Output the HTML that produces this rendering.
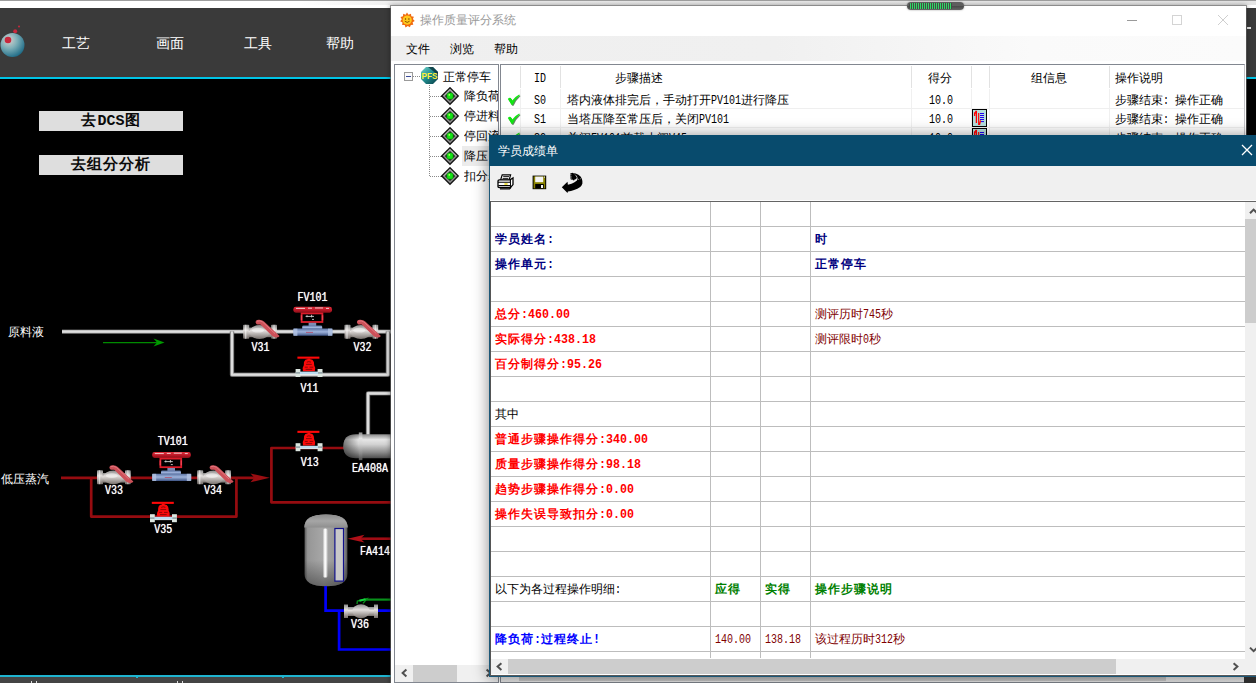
<!DOCTYPE html>
<html><head><meta charset="utf-8"><title>ui</title>
<style>
*{margin:0;padding:0;box-sizing:border-box}
html,body{width:1256px;height:683px;overflow:hidden;background:#000}
body{position:relative;font-family:"Liberation Serif",serif;font-size:12px;line-height:14px;color:#000}
.a{position:absolute}
.t{position:absolute;white-space:nowrap;font-size:12px;line-height:14px}
.c{font-family:"Liberation Serif",serif;font-size:12px}
.cb{font-family:"Liberation Serif",serif;font-size:12px;font-weight:bold;letter-spacing:1px}
.l{font-family:"Liberation Mono",monospace;font-size:10px;display:inline-block;transform:scaleY(1.32);transform-origin:0 74%;line-height:12px;vertical-align:baseline}
.lb{font-family:"Liberation Mono",monospace;font-size:11.667px;font-weight:bold;display:inline-block;transform:scaleY(1.13);transform-origin:0 74%;line-height:12px;vertical-align:baseline}
.ya{font-family:"Liberation Sans",sans-serif}
.lab{position:absolute;white-space:nowrap;color:#fff;font-family:"Liberation Mono",monospace;font-size:10px;line-height:12px;transform:scaleY(1.3);transform-origin:0 0;text-shadow:0 0 .6px #fff}
</style></head><body>
<div class="a" style="left:0;top:0;width:1256px;height:8px;background:#fff"></div><div class="a" style="left:300px;top:1px;width:956px;height:4px;background:linear-gradient(90deg,#fff 0,#ececec 12%,#e6e6e6 100%)"></div><div class="a" style="left:0;top:0;width:1256px;height:1px;background:#9e9e9e"></div><div class="a" style="left:907px;top:2px;width:57px;height:8px;border-radius:4px;background:linear-gradient(180deg,#5e5e5e 0,#5e5e5e 45%,#484848 50%,#666 100%);z-index:50;box-shadow:0 0 2px rgba(0,0,0,.4)"></div><div class="a" style="left:909px;top:3px;width:43.2px;height:6px;z-index:51;border-radius:2px 0 0 2px;background:repeating-linear-gradient(90deg,#444a46 0,#444a46 .8px,#30d864 .8px,#30d864 2px)"></div><div class="a" style="left:0;top:8px;width:1256px;height:69px;background:#3a3a3a"></div><div class="a" style="left:0;top:77px;width:1256px;height:2px;background:#00c4e6"></div><div class="a" style="left:1247px;top:27px;width:4px;height:2px;background:#e8e8e8"></div><svg class="a" style="left:0;top:20px" width="30" height="40" viewBox="0 0 30 40">
<defs><radialGradient id="lg" cx="35%" cy="30%" r="75%"><stop offset="0" stop-color="#d8d0cc"/><stop offset=".45" stop-color="#7fb0b8"/><stop offset="1" stop-color="#1d6a86"/></radialGradient></defs>
<circle cx="12.5" cy="25" r="12" fill="url(#lg)"/>
<circle cx="8" cy="20" r="3.3" fill="#c8283c"/>
<circle cx="15.2" cy="11.2" r="2" fill="#c8283c"/>
<circle cx="19" cy="6.6" r="1" fill="#c8283c"/>
</svg><div class="t ya" style="left:62px;top:34px;color:#fff;font-size:14px;line-height:18px">工艺</div><div class="t ya" style="left:156px;top:34px;color:#fff;font-size:14px;line-height:18px">画面</div><div class="t ya" style="left:244px;top:34px;color:#fff;font-size:14px;line-height:18px">工具</div><div class="t ya" style="left:326px;top:34px;color:#fff;font-size:14px;line-height:18px">帮助</div><div class="a" style="left:39px;top:111px;width:144px;height:20px;background:#dedede;text-align:center;font-weight:bold;font-size:15px;line-height:19px;letter-spacing:1px;color:#0a0a0a">去<span style="font-family:'Liberation Mono',monospace;letter-spacing:0">DCS</span>图</div><div class="a" style="left:39px;top:155px;width:144px;height:20px;background:#dedede;text-align:center;font-weight:bold;font-size:15px;line-height:19px;letter-spacing:1px;color:#0a0a0a">去组分分析</div><div class="t ya" style="left:8px;top:325px;color:#fff">原料液</div><div class="t ya" style="left:1px;top:472px;color:#fff">低压蒸汽</div><svg class="a" style="left:0;top:79px" width="391" height="596" viewBox="0 79 391 596"><defs>
<linearGradient id="pw" x1="0" y1="0" x2="0" y2="1"><stop offset="0" stop-color="#888"/><stop offset=".5" stop-color="#fff"/><stop offset="1" stop-color="#888"/></linearGradient>
<linearGradient id="vesH" x1="0" y1="0" x2="0" y2="1"><stop offset="0" stop-color="#8a8a8a"/><stop offset=".22" stop-color="#e6e6e6"/><stop offset=".42" stop-color="#d2d2d2"/><stop offset=".75" stop-color="#8c8c8c"/><stop offset="1" stop-color="#4c4c4c"/></linearGradient><linearGradient id="capL" x1="0" y1="0" x2="1" y2="0"><stop offset="0" stop-color="#000" stop-opacity=".45"/><stop offset="1" stop-color="#000" stop-opacity="0"/></linearGradient>
<linearGradient id="vesV" x1="0" y1="0" x2="1" y2="0"><stop offset="0" stop-color="#5c5c5c"/><stop offset=".07" stop-color="#969696"/><stop offset=".45" stop-color="#a8a8a8"/><stop offset=".6" stop-color="#a0a0a0"/><stop offset=".93" stop-color="#8a8a8a"/><stop offset="1" stop-color="#545454"/></linearGradient><linearGradient id="botsh" x1="0" y1="0" x2="0" y2="1"><stop offset="0" stop-color="#000" stop-opacity="0"/><stop offset="1" stop-color="#000" stop-opacity=".38"/></linearGradient><linearGradient id="hl" x1="0" y1="0" x2="1" y2="0"><stop offset="0" stop-color="#fff" stop-opacity="0"/><stop offset=".4" stop-color="#fff" stop-opacity=".95"/><stop offset=".6" stop-color="#fff" stop-opacity=".95"/><stop offset="1" stop-color="#fff" stop-opacity="0"/></linearGradient><linearGradient id="dome" x1="0" y1="0" x2="0" y2="1"><stop offset="0" stop-color="#8a8a8a"/><stop offset=".5" stop-color="#a6a6a6"/><stop offset="1" stop-color="#8e8e8e"/></linearGradient>
<linearGradient id="sil" x1="0" y1="0" x2="0" y2="1"><stop offset="0" stop-color="#8a8a8a"/><stop offset=".4" stop-color="#e4e0de"/><stop offset="1" stop-color="#77706c"/></linearGradient>
<linearGradient id="blu" x1="0" y1="0" x2="0" y2="1"><stop offset="0" stop-color="#5c74a4"/><stop offset=".45" stop-color="#9fb4dc"/><stop offset="1" stop-color="#3d5384"/></linearGradient>
<linearGradient id="redd" x1="0" y1="0" x2="0" y2="1"><stop offset="0" stop-color="#e0303c"/><stop offset=".5" stop-color="#c01828"/><stop offset="1" stop-color="#8a1018"/></linearGradient>
<g id="ball">
 <rect x="0.2" y="5.2" width="6" height="14" rx=".8" fill="url(#sil)"/>
 <rect x="2" y="5.2" width="1.4" height="14" fill="#fff" opacity=".55"/>
 <rect x="28.2" y="5.2" width="5.7" height="14" rx=".8" fill="url(#sil)"/>
 <rect x="30.4" y="5.2" width="1.3" height="14" fill="#fff" opacity=".5"/>
 <rect x="5.6" y="8" width="23" height="9.6" fill="url(#sil)"/>
 <ellipse cx="16.6" cy="12.4" rx="10" ry="6.9" fill="url(#sil)"/>
 <ellipse cx="15" cy="10.6" rx="6" ry="2.4" fill="#fff" opacity=".45"/>
 <path d="M12.6 3 Q12.4 0.4 15.6 0.2 Q19 0 21 2 L36.6 16.4 Q35.6 18.2 32.6 18 L29.8 17 L17.4 4.8 Q15 5 13.6 4.6 Z" fill="#cc5058"/>
 <path d="M14 1.6 Q17 0.6 19.6 2.4 L32 14" stroke="#e88088" stroke-width="1" fill="none" opacity=".8"/>
</g>
<g id="ctrl">
 <rect x="0.4" y="0" width="38.6" height="5.9" rx="2.4" fill="url(#redd)"/>
 <path d="M3 1.6 H12 M15 1.4 H19 M22 1.2 H30 M33 1.6 H36" stroke="#fff" stroke-width="1" opacity=".75"/>
 <rect x="8.6" y="6.6" width="20.8" height="8.6" fill="#000" stroke="#dc1c2a" stroke-width="1.8"/>
 <path d="M12.6 9.6 H21 M14 8.4 V10.4 M18.6 8 V10.6 M19 12.6 H21" stroke="#e8e8e8" stroke-width=".9" opacity=".9"/>
 <rect x="7.8" y="8.4" width="1.4" height="5" fill="#f04050"/><rect x="28.8" y="8.4" width="1.4" height="5" fill="#f04050"/>
 <rect x="15.6" y="16" width="7.6" height="3.4" fill="#7c8cb4"/>
 <rect x="9.2" y="18.6" width="20" height="4.6" rx="1.4" fill="url(#blu)"/>
 <rect x="0.4" y="21.8" width="39" height="7.2" rx="1" fill="url(#blu)"/>
 <rect x="0.4" y="21.8" width="4" height="7.2" fill="#b4c4e4" opacity=".8"/><rect x="35" y="21.8" width="4.4" height="7.2" fill="#b4c4e4" opacity=".8"/>
 <path d="M13 25.6 H20" stroke="#c03048" stroke-width=".8" opacity=".8"/>
</g>
<g id="gate">
 <rect x="1.2" y="-0.2" width="22" height="2.1" fill="#ff0808"/>
 <rect x="11.4" y="1.8" width="2.6" height="2.4" fill="#f01010"/>
 <path d="M9.2 3 Q12.6 1.6 16.2 3 Q18.4 5 18 8.4 Q19.8 11 18.6 14.4 H6.8 Q5.6 11 7.6 8.4 Q7 5 9.2 3 Z" fill="#fa0a0a"/>
 <path d="M10.6 5.4 Q12.6 4.2 14.8 5.4 M9.8 7.6 H15.6 M8.6 10.4 H11.6 M13.4 10.4 H17 M9.4 12.6 H16" stroke="#6a0404" stroke-width=".9" fill="none" opacity=".85"/>
 <rect x="-0.6" y="12.2" width="4.8" height="8" fill="#dce6e0"/>
 <rect x="-0.6" y="15.4" width="4.8" height="1.4" fill="#8a9aa0"/>
 <rect x="21.4" y="12.2" width="4.9" height="8" fill="#dce6e0"/>
 <rect x="21.4" y="15.4" width="4.9" height="1.4" fill="#8a9aa0"/>
 <rect x="3.8" y="14.8" width="18" height="3" fill="#bcdcf0"/>
 <rect x="3.8" y="17.2" width="18" height=".9" fill="#e8eef0"/>
</g>
</defs><path d="M62 331.6 H392" fill="none" stroke="#5e5e5e" stroke-width="4.4" stroke-linejoin="round"/><path d="M62 331.6 H392" fill="none" stroke="#a8a8a8" stroke-width="3.2" stroke-linejoin="round"/><path d="M62 331.6 H392" fill="none" stroke="#dedede" stroke-width="2.1" stroke-linejoin="round"/><path d="M232 331.6 V374.7 H387.9 V331.6" fill="none" stroke="#5e5e5e" stroke-width="4.4" stroke-linejoin="round"/><path d="M232 331.6 V374.7 H387.9 V331.6" fill="none" stroke="#a8a8a8" stroke-width="3.2" stroke-linejoin="round"/><path d="M232 331.6 V374.7 H387.9 V331.6" fill="none" stroke="#dedede" stroke-width="2.1" stroke-linejoin="round"/><path d="M392 393.4 H368 V436" fill="none" stroke="#5e5e5e" stroke-width="4.4" stroke-linejoin="round"/><path d="M392 393.4 H368 V436" fill="none" stroke="#a8a8a8" stroke-width="3.2" stroke-linejoin="round"/><path d="M392 393.4 H368 V436" fill="none" stroke="#dedede" stroke-width="2.1" stroke-linejoin="round"/><path d="M103 342.6 H160" stroke="#008a00" stroke-width="1.2" fill="none"/><path d="M164.5 342.6 L153.5 338.6 L157 342.6 L153.5 346.6 Z" fill="#009a00"/><path d="M61 477.9 H256" fill="none" stroke="#960c10" stroke-width="2.7" stroke-linejoin="round"/><path d="M91.2 477.9 V516.6 H236.4 V477.9" fill="none" stroke="#960c10" stroke-width="2.7" stroke-linejoin="round"/><path d="M269.8 477.8 L250.5 473.4 L254.4 477.8 L250.5 482.2 Z" fill="#9a0e12"/><path d="M344 448 H271.4 V502.3 H392" fill="none" stroke="#960c10" stroke-width="2.7" stroke-linejoin="round"/><path d="M392 434.3 H356 Q343.4 434.3 343.4 446.3 Q343.4 458.3 356 458.3 H392 Z" fill="url(#vesH)"/><rect x="358.8" y="432.4" width="3.6" height="27.8" fill="url(#vesH)"/><path d="M358.8 434.3 H356 Q343.4 434.3 343.4 446.3 Q343.4 458.3 356 458.3 H358.8 Z" fill="url(#capL)"/><path d="M304.6 526 Q304.6 514.4 326 514.4 Q347.4 514.4 347.4 526 V574 Q347.4 586.3 326 586.3 Q304.6 586.3 304.6 574 Z" fill="url(#vesV)"/><path d="M304.6 560 H347.4 V574 Q347.4 586.3 326 586.3 Q304.6 586.3 304.6 574 Z" fill="url(#botsh)"/><rect x="322.6" y="528.5" width="5.4" height="49" rx="2.6" fill="url(#hl)"/><path d="M304.2 527.6 Q304.6 514.4 326 514.4 Q347.4 514.4 347.8 527.6 Z" fill="url(#dome)"/><rect x="334.9" y="528.5" width="8.6" height="52.6" fill="#c9c9c9" stroke="#10108c" stroke-width="1.2"/><path d="M392 538.7 H360" stroke="#a00c14" stroke-width="2.6" fill="none"/><path d="M347.6 538.7 L364.5 534.8 L360.5 538.7 L364.5 542.6 Z" fill="#b01018"/><path d="M325.6 586 V610.6 H392 M339.1 610.6 V649.5 H392" fill="none" stroke="#0000fb" stroke-width="2.7"/><path d="M357 604 L357.4 601 L367 598.6 L363 603.4" fill="none" stroke="#0a8a1a" stroke-width="1.4"/><path d="M359.4 600.8 L365.6 599.2" stroke="#14d43c" stroke-width="2.2"/><path d="M366 599.6 H392" fill="none" stroke="#08901a" stroke-width="2.2"/><use href="#ball" x="243" y="319.6"/><use href="#ball" x="344.3" y="319.6"/><use href="#ctrl" x="293" y="306.8"/><use href="#gate" x="296.2" y="356.8"/><use href="#gate" x="296.2" y="431"/><use href="#ball" x="96.8" y="465"/><use href="#ball" x="197" y="465"/><use href="#ctrl" x="151.8" y="452"/><use href="#gate" x="150.6" y="502"/><g transform="translate(344,604)">
 <rect x="0" y="0.5" width="4" height="13.5" fill="url(#sil)"/><rect x="30" y="0.5" width="4" height="13.5" fill="url(#sil)"/>
 <rect x="4" y="3" width="26" height="9" fill="url(#sil)"/><ellipse cx="17" cy="7.2" rx="8.5" ry="7" fill="url(#sil)"/>
</g></svg><div class="lab" style="left:297.5px;top:291.3px">FV101</div><div class="lab" style="left:251.5px;top:341.0px">V31</div><div class="lab" style="left:353.6px;top:341.0px">V32</div><div class="lab" style="left:300.5px;top:382.2px">V11</div><div class="lab" style="left:300.8px;top:456.2px">V13</div><div class="lab" style="left:352.0px;top:462.3px">EA408A</div><div class="lab" style="left:157.8px;top:435.4px">TV101</div><div class="lab" style="left:105.0px;top:484.2px">V33</div><div class="lab" style="left:204.0px;top:484.2px">V34</div><div class="lab" style="left:154.2px;top:523.3px">V35</div><div class="lab" style="left:360.0px;top:544.5px">FA414</div><div class="lab" style="left:351.0px;top:618.3px">V36</div><div class="a" style="left:0;top:675px;width:391px;height:2px;background:#1fb4d0"></div><div class="a" style="left:0;top:677px;width:391px;height:6px;background:#444"></div><div class="a" style="left:136px;top:676px;width:2px;height:2px;background:#1fb4d0"></div><div class="a" style="left:282px;top:676px;width:2px;height:2px;background:#1fb4d0"></div><div class="a" style="left:31px;top:681px;width:1px;height:2px;background:#ddd"></div><div class="a" style="left:36px;top:681px;width:1px;height:2px;background:#ddd"></div><div class="a" style="left:177px;top:681px;width:1px;height:2px;background:#ddd"></div><div class="a" style="left:182px;top:681px;width:1px;height:2px;background:#ddd"></div><div class="a" id="win" style="left:390px;top:5px;width:857px;height:690px;background:#fff;background-clip:padding-box;border:1px solid rgba(100,100,100,.62);box-shadow:0 0 5px rgba(0,0,0,.35)"></div><svg class="a" style="left:399px;top:12px" width="16" height="16" viewBox="0 0 16 16">
<path d="M8 0.6 L9.5 2.8 L12 1.7 L12.3 4.3 L14.9 4.7 L13.9 7.1 L15.7 8.9 L13.6 10.3 L14.3 12.8 L11.8 12.9 L10.9 15.3 L8.8 14 L6.5 15.4 L5.7 12.9 L3.1 13 L3.5 10.4 L1.2 9.2 L2.8 7.2 L1.5 4.9 L4 4.3 L4.2 1.7 L6.6 2.8 Z" fill="#f06a10"/>
<circle cx="8.2" cy="8.1" r="4.6" fill="#ffc81c"/>
<circle cx="6.5" cy="7" r=".7" fill="#6a3a00"/><circle cx="9.9" cy="7" r=".7" fill="#6a3a00"/>
<path d="M5.8 9.2 Q8.2 11.6 10.6 9.2" stroke="#6a3a00" stroke-width=".8" fill="none"/>
</svg><div class="t ya" style="left:420px;top:12px;color:#9a9a9a;font-size:12px;line-height:16px">操作质量评分系统</div><div class="a" style="left:1127px;top:20px;width:10px;height:1px;background:#9a9a9a"></div><div class="a" style="left:1172px;top:15px;width:10px;height:10px;border:1px solid #d4d4d4"></div><svg class="a" style="left:1217px;top:14px" width="12" height="12" viewBox="0 0 12 12"><path d="M1 1 L11 11 M11 1 L1 11" stroke="#cfcfcf" stroke-width="1"/></svg><div class="a" style="left:391px;top:36px;width:855px;height:25px;background:linear-gradient(90deg,#efefef 0,#f0f0f0 45%,#fafafa 75%,#fbfbfb 100%)"></div><div class="t ya" style="left:406px;top:41px;font-size:12px;line-height:16px">文件</div><div class="t ya" style="left:450px;top:41px;font-size:12px;line-height:16px">浏览</div><div class="t ya" style="left:494px;top:41px;font-size:12px;line-height:16px">帮助</div><div class="a" style="left:394px;top:64px;width:105px;height:619px;border:1px solid #828790;background:#fff"></div><div class="a" style="left:395px;top:665px;width:103px;height:17px;background:#f0f0f0"></div><div class="a" style="left:413px;top:665px;width:44px;height:17px;background:#cdcdcd"></div><svg class="a" style="left:400px;top:668px" width="8" height="10" viewBox="0 0 8 10"><path d="M6.4 1.4 L2.6 5 L6.4 8.6" stroke="#505050" stroke-width="2" fill="none"/></svg><svg class="a" style="left:485px;top:668px" width="8" height="10" viewBox="0 0 8 10"><path d="M1.6 1.4 L5.4 5 L1.6 8.6" stroke="#505050" stroke-width="2" fill="none"/></svg><div class="a" style="left:462px;top:146px;width:36px;height:20px;background:#ececec"></div><div class="a" style="left:413px;top:76px;width:8px;height:1px;background:repeating-linear-gradient(90deg,#8a8a8a 0,#8a8a8a 1px,transparent 1px,transparent 2px)"></div><div class="a" style="left:429px;top:85px;width:1px;height:92px;background:repeating-linear-gradient(180deg,#8a8a8a 0,#8a8a8a 1px,transparent 1px,transparent 2px)"></div><div class="a" style="left:430px;top:96px;width:12px;height:1px;background:repeating-linear-gradient(90deg,#8a8a8a 0,#8a8a8a 1px,transparent 1px,transparent 2px)"></div><div class="a" style="left:430px;top:116px;width:12px;height:1px;background:repeating-linear-gradient(90deg,#8a8a8a 0,#8a8a8a 1px,transparent 1px,transparent 2px)"></div><div class="a" style="left:430px;top:136px;width:12px;height:1px;background:repeating-linear-gradient(90deg,#8a8a8a 0,#8a8a8a 1px,transparent 1px,transparent 2px)"></div><div class="a" style="left:430px;top:156px;width:12px;height:1px;background:repeating-linear-gradient(90deg,#8a8a8a 0,#8a8a8a 1px,transparent 1px,transparent 2px)"></div><div class="a" style="left:430px;top:176px;width:12px;height:1px;background:repeating-linear-gradient(90deg,#8a8a8a 0,#8a8a8a 1px,transparent 1px,transparent 2px)"></div><div class="a" style="left:404px;top:72px;width:9px;height:9px;border:1px solid #9a9a9a;background:#fafafa"></div><div class="a" style="left:406px;top:76px;width:5px;height:1px;background:#3a4a9a"></div><svg class="a" style="left:420px;top:66px" width="19" height="19" viewBox="0 0 19 19">
<defs><linearGradient id="pf" x1="0" y1="0" x2="1" y2="1"><stop offset="0" stop-color="#6fd0c8"/><stop offset=".5" stop-color="#1f8a8c"/><stop offset="1" stop-color="#083a44"/></linearGradient></defs>
<path d="M6 1 H13 L18 6 V13 L13 18 H6 L1 13 V6 Z" fill="url(#pf)"/>
<path d="M8 1 H13 L18 6 V9 Z" fill="#0a2a34" opacity=".75"/>
<text x="9.5" y="13" font-family="Liberation Sans" font-weight="bold" font-size="8.6" text-anchor="middle" fill="#fff23a" textLength="16" lengthAdjust="spacingAndGlyphs">PFS</text>
</svg><div class="t" style="left:443px;top:70px"><span class="c">正常停车</span></div><svg class="a" style="left:441px;top:87px" width="19" height="19" viewBox="0 0 19 19">
<path d="M9 -0.2 L18.2 9 L9 18.2 L-0.2 9 Z" fill="#161616"/>
<path d="M9 1.8 L16.2 9 L9 16.2 L1.8 9 Z" fill="#8e8e8e"/>
<path d="M9 1.8 L16.2 9 L12.6 9 L9 5.4 L5.4 9 L1.8 9 Z" fill="#b4b4b4" opacity=".7"/>
<path d="M9 3.9 L14.1 9 L9 14.1 L3.9 9 Z" fill="#101010"/>
<circle cx="9" cy="9" r="3.5" fill="#0fc80f"/><circle cx="9" cy="9" r="2.4" fill="#18e418"/><circle cx="8.3" cy="7.9" r=".8" fill="#d8f870"/>
</svg><div class="a" style="left:464px;top:89px;width:34px;height:14px;overflow:hidden;white-space:nowrap"><span class="c">降负荷</span></div><svg class="a" style="left:441px;top:107px" width="19" height="19" viewBox="0 0 19 19">
<path d="M9 -0.2 L18.2 9 L9 18.2 L-0.2 9 Z" fill="#161616"/>
<path d="M9 1.8 L16.2 9 L9 16.2 L1.8 9 Z" fill="#8e8e8e"/>
<path d="M9 1.8 L16.2 9 L12.6 9 L9 5.4 L5.4 9 L1.8 9 Z" fill="#b4b4b4" opacity=".7"/>
<path d="M9 3.9 L14.1 9 L9 14.1 L3.9 9 Z" fill="#101010"/>
<circle cx="9" cy="9" r="3.5" fill="#0fc80f"/><circle cx="9" cy="9" r="2.4" fill="#18e418"/><circle cx="8.3" cy="7.9" r=".8" fill="#d8f870"/>
</svg><div class="a" style="left:464px;top:109px;width:34px;height:14px;overflow:hidden;white-space:nowrap"><span class="c">停进料</span></div><svg class="a" style="left:441px;top:127px" width="19" height="19" viewBox="0 0 19 19">
<path d="M9 -0.2 L18.2 9 L9 18.2 L-0.2 9 Z" fill="#161616"/>
<path d="M9 1.8 L16.2 9 L9 16.2 L1.8 9 Z" fill="#8e8e8e"/>
<path d="M9 1.8 L16.2 9 L12.6 9 L9 5.4 L5.4 9 L1.8 9 Z" fill="#b4b4b4" opacity=".7"/>
<path d="M9 3.9 L14.1 9 L9 14.1 L3.9 9 Z" fill="#101010"/>
<circle cx="9" cy="9" r="3.5" fill="#0fc80f"/><circle cx="9" cy="9" r="2.4" fill="#18e418"/><circle cx="8.3" cy="7.9" r=".8" fill="#d8f870"/>
</svg><div class="a" style="left:464px;top:129px;width:34px;height:14px;overflow:hidden;white-space:nowrap"><span class="c">停回流</span></div><svg class="a" style="left:441px;top:147px" width="19" height="19" viewBox="0 0 19 19">
<path d="M9 -0.2 L18.2 9 L9 18.2 L-0.2 9 Z" fill="#161616"/>
<path d="M9 1.8 L16.2 9 L9 16.2 L1.8 9 Z" fill="#8e8e8e"/>
<path d="M9 1.8 L16.2 9 L12.6 9 L9 5.4 L5.4 9 L1.8 9 Z" fill="#b4b4b4" opacity=".7"/>
<path d="M9 3.9 L14.1 9 L9 14.1 L3.9 9 Z" fill="#101010"/>
<circle cx="9" cy="9" r="3.5" fill="#0fc80f"/><circle cx="9" cy="9" r="2.4" fill="#18e418"/><circle cx="8.3" cy="7.9" r=".8" fill="#d8f870"/>
</svg><div class="a" style="left:464px;top:149px;width:34px;height:14px;overflow:hidden;white-space:nowrap"><span class="c">降压</span></div><svg class="a" style="left:441px;top:167px" width="19" height="19" viewBox="0 0 19 19">
<path d="M9 -0.2 L18.2 9 L9 18.2 L-0.2 9 Z" fill="#161616"/>
<path d="M9 1.8 L16.2 9 L9 16.2 L1.8 9 Z" fill="#8e8e8e"/>
<path d="M9 1.8 L16.2 9 L12.6 9 L9 5.4 L5.4 9 L1.8 9 Z" fill="#b4b4b4" opacity=".7"/>
<path d="M9 3.9 L14.1 9 L9 14.1 L3.9 9 Z" fill="#101010"/>
<circle cx="9" cy="9" r="3.5" fill="#0fc80f"/><circle cx="9" cy="9" r="2.4" fill="#18e418"/><circle cx="8.3" cy="7.9" r=".8" fill="#d8f870"/>
</svg><div class="a" style="left:464px;top:169px;width:34px;height:14px;overflow:hidden;white-space:nowrap"><span class="c">扣分步骤</span></div><div class="a" style="left:500px;top:64px;width:745px;height:619px;border:1px solid #828790;border-right-color:#c4c4c8;background:#fff"></div><div class="a" style="left:520px;top:66px;width:1px;height:22px;background:#e2e2e2"></div><div class="a" style="left:520px;top:89px;width:1px;height:60px;background:#f0f0f0"></div><div class="a" style="left:560px;top:66px;width:1px;height:22px;background:#e2e2e2"></div><div class="a" style="left:560px;top:89px;width:1px;height:60px;background:#f0f0f0"></div><div class="a" style="left:911px;top:66px;width:1px;height:22px;background:#e2e2e2"></div><div class="a" style="left:911px;top:89px;width:1px;height:60px;background:#f0f0f0"></div><div class="a" style="left:971px;top:66px;width:1px;height:22px;background:#e2e2e2"></div><div class="a" style="left:971px;top:89px;width:1px;height:60px;background:#f0f0f0"></div><div class="a" style="left:989px;top:66px;width:1px;height:22px;background:#e2e2e2"></div><div class="a" style="left:989px;top:89px;width:1px;height:60px;background:#f0f0f0"></div><div class="a" style="left:1109px;top:66px;width:1px;height:22px;background:#e2e2e2"></div><div class="a" style="left:1109px;top:89px;width:1px;height:60px;background:#f0f0f0"></div><div class="a" style="left:501px;top:108px;width:743px;height:1px;background:#efefef"></div><div class="a" style="left:501px;top:127px;width:743px;height:1px;background:#efefef"></div><div class="t" style="left:534px;top:71px"><span class="l">ID</span></div><div class="t" style="left:615px;top:71px"><span class="c">步骤描述</span></div><div class="t" style="left:928px;top:71px"><span class="c">得分</span></div><div class="t" style="left:1031px;top:71px"><span class="c">组信息</span></div><div class="t" style="left:1115px;top:71px"><span class="c">操作说明</span></div><svg class="a" style="left:507px;top:94px" width="14" height="13" viewBox="0 0 14 13">
<path d="M1.6 6 Q3 4.2 4.6 5 L6 7.6 Q9 3.4 13 1.4 L13.4 2.2 Q9 6 6.6 11.8 L5.2 11.8 Q3.4 8.4 1.6 6 Z" fill="#3a6a3a" opacity=".8"/>
<path d="M0.8 5 Q2.2 3.2 3.8 4 L5.2 6.6 Q8.2 2.4 12.2 0.4 L12.8 1.2 Q8.2 5 5.8 10.8 L4.4 10.8 Q2.6 7.4 0.8 5 Z" fill="#12e612"/>
</svg><div class="t" style="left:534px;top:93px"><span class="l">S0</span></div><div class="t" style="left:567px;top:93px"><span class="c">塔内液体排完后，手动打开</span><span class="l">PV101</span><span class="c">进行降压</span></div><div class="t" style="left:929px;top:93px"><span class="l">10.0</span></div><div class="t" style="left:1115px;top:93px"><span class="c">步骤结束</span><span class="l">:&nbsp;</span><span class="c">操作正确</span></div><svg class="a" style="left:507px;top:113px" width="14" height="13" viewBox="0 0 14 13">
<path d="M1.6 6 Q3 4.2 4.6 5 L6 7.6 Q9 3.4 13 1.4 L13.4 2.2 Q9 6 6.6 11.8 L5.2 11.8 Q3.4 8.4 1.6 6 Z" fill="#3a6a3a" opacity=".8"/>
<path d="M0.8 5 Q2.2 3.2 3.8 4 L5.2 6.6 Q8.2 2.4 12.2 0.4 L12.8 1.2 Q8.2 5 5.8 10.8 L4.4 10.8 Q2.6 7.4 0.8 5 Z" fill="#12e612"/>
</svg><div class="t" style="left:534px;top:112px"><span class="l">S1</span></div><div class="t" style="left:567px;top:112px"><span class="c">当塔压降至常压后，关闭</span><span class="l">PV101</span></div><div class="t" style="left:929px;top:112px"><span class="l">10.0</span></div><div class="t" style="left:1115px;top:112px"><span class="c">步骤结束</span><span class="l">:&nbsp;</span><span class="c">操作正确</span></div><svg class="a" style="left:972px;top:109px" width="15" height="18" viewBox="0 0 15 18">
<rect x=".5" y=".5" width="14" height="17" fill="#b4dedc" stroke="#000"/>
<path d="M2.6 7 V4 H3.8 V2.4 H4.4 V14" stroke="#ff0000" stroke-width="1.3" fill="none"/>
<path d="M6.7 4 V15.4 H7.6 L8.6 11.4" stroke="#ff0000" stroke-width="1.2" fill="none"/>
<path d="M8 4.5 H12 M8 6.5 H12 M8 8.5 H12 M8 10.5 H12 M9 12.6 H12" stroke="#2000f0" stroke-width="1"/>
</svg><svg class="a" style="left:507px;top:132px" width="14" height="13" viewBox="0 0 14 13">
<path d="M1.6 6 Q3 4.2 4.6 5 L6 7.6 Q9 3.4 13 1.4 L13.4 2.2 Q9 6 6.6 11.8 L5.2 11.8 Q3.4 8.4 1.6 6 Z" fill="#3a6a3a" opacity=".8"/>
<path d="M0.8 5 Q2.2 3.2 3.8 4 L5.2 6.6 Q8.2 2.4 12.2 0.4 L12.8 1.2 Q8.2 5 5.8 10.8 L4.4 10.8 Q2.6 7.4 0.8 5 Z" fill="#12e612"/>
</svg><div class="t" style="left:534px;top:131px"><span class="l">S2</span></div><div class="t" style="left:567px;top:131px"><span class="c">关闭</span><span class="l">FV101</span><span class="c">前截止阀</span><span class="l">V45</span></div><div class="t" style="left:929px;top:131px"><span class="l">10.0</span></div><div class="t" style="left:1115px;top:131px"><span class="c">步骤结束</span><span class="l">:&nbsp;</span><span class="c">操作正确</span></div><svg class="a" style="left:972px;top:128px" width="15" height="18" viewBox="0 0 15 18">
<rect x=".5" y=".5" width="14" height="17" fill="#b4dedc" stroke="#000"/>
<path d="M2.6 7 V4 H3.8 V2.4 H4.4 V14" stroke="#ff0000" stroke-width="1.3" fill="none"/>
<path d="M6.7 4 V15.4 H7.6 L8.6 11.4" stroke="#ff0000" stroke-width="1.2" fill="none"/>
<path d="M8 4.5 H12 M8 6.5 H12 M8 8.5 H12 M8 10.5 H12 M9 12.6 H12" stroke="#2000f0" stroke-width="1"/>
</svg><div class="a" style="left:489px;top:135px;width:790px;height:542px;background:#fff;border:1px solid #1c5878;box-shadow:0 1px 14px 1px rgba(0,0,0,.42)"></div><div class="a" style="left:490px;top:201px;width:1px;height:475px;background:#555;z-index:3"></div><div class="a" style="left:490px;top:675px;width:790px;height:1px;background:#5a5a5a;z-index:3"></div><div class="a" style="left:489px;top:135px;width:790px;height:31px;background:#084b6d"></div><div class="t ya" style="left:498px;top:143px;color:#fff;font-size:12px;line-height:16px">学员成绩单</div><svg class="a" style="left:1241px;top:144px" width="12" height="12" viewBox="0 0 12 12"><path d="M1 1 L11 11 M11 1 L1 11" stroke="#fff" stroke-width="1.3"/></svg><div class="a" style="left:490px;top:166px;width:790px;height:35px;background:#f0f0f0"></div><div class="a" style="left:490px;top:200px;width:790px;height:1px;background:#fcfcfc"></div><div class="a" style="left:490px;top:201px;width:790px;height:1px;background:#646464"></div><svg class="a" style="left:497px;top:174px" width="18" height="16" viewBox="0 0 18 16">
<path d="M5.2 0.8 H13.6 L12.2 6 H3.6 Z" fill="#fff" stroke="#000" stroke-width="1.2"/>
<path d="M6.2 2.6 H12 M5.6 4.4 H11.4" stroke="#000" stroke-width=".9"/>
<path d="M1 7 Q1 5.8 2.4 5.8 H13 L16 4 V10.6 L13.4 13.6 H2.4 Q1 13.6 1 12.4 Z" fill="#fff" stroke="#000" stroke-width="1.3"/>
<path d="M1 8.2 H13.4 M1.4 11.6 H13.2 M13.4 6 V13.4" stroke="#000" stroke-width="1.1" fill="none"/>
<rect x="2" y="9" width="11" height="2" fill="#fff"/><rect x="7.4" y="9.3" width="3.2" height="1.4" fill="#e6d400"/>
<path d="M3 14.8 H12.6 L14 13.4" stroke="#000" stroke-width="1.2" fill="none"/>
</svg><svg class="a" style="left:532px;top:175px" width="15" height="15" viewBox="0 0 15 15">
<rect x=".6" y=".6" width="13.6" height="13.6" fill="#000"/>
<rect x="1.6" y="1.4" width="11.6" height="12" fill="#8a8400"/>
<rect x="3.2" y="1.6" width="8" height="5.6" fill="#f4f4f4"/>
<rect x="3.2" y="9" width="8.6" height="4.6" fill="#000"/>
<rect x="9" y="10" width="2" height="3" fill="#f4f4f4"/>
<rect x="12" y="1.6" width="1" height="1" fill="#f4f4f4"/>
</svg><svg class="a" style="left:561px;top:172px" width="23" height="22" viewBox="0 0 23 22">
<path d="M0.8 15.3 L6.5 9.8 L6.9 12.8 Q11 12 13.1 10.6 Q16.4 8.6 16.6 7.1 Q16.6 5 15.3 3.6 Q13.6 1.8 11.3 1 Q15 1 17.4 2.8 Q20.4 4.6 20.9 7.1 Q21.8 9.6 21.4 11.5 Q20.8 13.6 19.2 15 Q16.6 17.2 13.1 18.1 Q10 19.2 6.9 19.4 L6.5 21 Z" fill="#000"/>
<path d="M11.6 0.8 L9.2 1.4 L9.6 7.2 L13 8.6 L16 6 L14 2.4 Z" fill="#000"/>
<path d="M9.8 2 L10.4 7" stroke="#f0f0f0" stroke-width=".7" stroke-dasharray=".9 .9"/>
<path d="M11 8 Q16 8.4 20.4 6.4" stroke="#f0f0f0" stroke-width=".6" fill="none" stroke-dasharray="1 1"/>
</svg><div class="a" style="left:490px;top:226px;width:755px;height:1px;background:#bdbdbd"></div><div class="a" style="left:490px;top:251px;width:755px;height:1px;background:#bdbdbd"></div><div class="a" style="left:490px;top:276px;width:755px;height:1px;background:#bdbdbd"></div><div class="a" style="left:490px;top:301px;width:755px;height:1px;background:#bdbdbd"></div><div class="a" style="left:490px;top:326px;width:755px;height:1px;background:#bdbdbd"></div><div class="a" style="left:490px;top:351px;width:755px;height:1px;background:#bdbdbd"></div><div class="a" style="left:490px;top:376px;width:755px;height:1px;background:#bdbdbd"></div><div class="a" style="left:490px;top:401px;width:755px;height:1px;background:#bdbdbd"></div><div class="a" style="left:490px;top:426px;width:755px;height:1px;background:#bdbdbd"></div><div class="a" style="left:490px;top:451px;width:755px;height:1px;background:#bdbdbd"></div><div class="a" style="left:490px;top:476px;width:755px;height:1px;background:#bdbdbd"></div><div class="a" style="left:490px;top:501px;width:755px;height:1px;background:#bdbdbd"></div><div class="a" style="left:490px;top:526px;width:755px;height:1px;background:#bdbdbd"></div><div class="a" style="left:490px;top:551px;width:755px;height:1px;background:#bdbdbd"></div><div class="a" style="left:490px;top:576px;width:755px;height:1px;background:#bdbdbd"></div><div class="a" style="left:490px;top:601px;width:755px;height:1px;background:#bdbdbd"></div><div class="a" style="left:490px;top:626px;width:755px;height:1px;background:#bdbdbd"></div><div class="a" style="left:490px;top:651px;width:755px;height:1px;background:#bdbdbd"></div><div class="a" style="left:710px;top:202px;width:1px;height:456px;background:#bdbdbd"></div><div class="a" style="left:760px;top:202px;width:1px;height:456px;background:#bdbdbd"></div><div class="a" style="left:810px;top:202px;width:1px;height:456px;background:#bdbdbd"></div><div class="t" style="left:495px;top:232px;color:#000080"><span class="cb">学员姓名</span><span class="lb">:</span></div><div class="t" style="left:815px;top:232px;color:#000080"><span class="cb">时</span></div><div class="t" style="left:495px;top:257px;color:#000080"><span class="cb">操作单元</span><span class="lb">:</span></div><div class="t" style="left:815px;top:257px;color:#000080"><span class="cb">正常停车</span></div><div class="t" style="left:495px;top:307px;color:#ff0000"><span class="cb">总分</span><span class="lb">:460.00</span></div><div class="t" style="left:815px;top:307px;color:#800000"><span class="c">测评历时</span><span class="l">745</span><span class="c">秒</span></div><div class="t" style="left:495px;top:332px;color:#ff0000"><span class="cb">实际得分</span><span class="lb">:438.18</span></div><div class="t" style="left:815px;top:332px;color:#800000"><span class="c">测评限时</span><span class="l">0</span><span class="c">秒</span></div><div class="t" style="left:495px;top:357px;color:#ff0000"><span class="cb">百分制得分</span><span class="lb">:95.26</span></div><div class="t" style="left:495px;top:407px;color:#000"><span class="c">其中</span></div><div class="t" style="left:495px;top:432px;color:#ff0000"><span class="cb">普通步骤操作得分</span><span class="lb">:340.00</span></div><div class="t" style="left:495px;top:457px;color:#ff0000"><span class="cb">质量步骤操作得分</span><span class="lb">:98.18</span></div><div class="t" style="left:495px;top:482px;color:#ff0000"><span class="cb">趋势步骤操作得分</span><span class="lb">:0.00</span></div><div class="t" style="left:495px;top:507px;color:#ff0000"><span class="cb">操作失误导致扣分</span><span class="lb">:0.00</span></div><div class="t" style="left:495px;top:582px;color:#000"><span class="c">以下为各过程操作明细</span><span class="l">:</span></div><div class="t" style="left:715px;top:582px;color:#008000"><span class="cb">应得</span></div><div class="t" style="left:765px;top:582px;color:#008000"><span class="cb">实得</span></div><div class="t" style="left:815px;top:582px;color:#008000"><span class="cb">操作步骤说明</span></div><div class="t" style="left:495px;top:632px;color:#0000ff"><span class="cb">降负荷</span><span class="lb">:</span><span class="cb">过程终止</span><span class="lb">!</span></div><div class="t" style="left:715px;top:632px;color:#800000"><span class="l">140.00</span></div><div class="t" style="left:765px;top:632px;color:#800000"><span class="l">138.18</span></div><div class="t" style="left:815px;top:632px;color:#800000"><span class="c">该过程历时</span><span class="l">312</span><span class="c">秒</span></div><div class="a" style="left:1245px;top:202px;width:17px;height:457px;background:#f0f0f0"></div><div class="a" style="left:1245px;top:219px;width:17px;height:104px;background:#cdcdcd"></div><svg class="a" style="left:1249px;top:207px" width="10" height="8" viewBox="0 0 10 8"><path d="M1 6.2 L4.6 2.6 L8.2 6.2" stroke="#505050" stroke-width="2" fill="none"/></svg><svg class="a" style="left:1249px;top:646px" width="10" height="8" viewBox="0 0 10 8"><path d="M1 1.6 L4.6 5.2 L8.2 1.6" stroke="#505050" stroke-width="2" fill="none"/></svg><div class="a" style="left:491px;top:659px;width:790px;height:15px;background:#f0f0f0"></div><div class="a" style="left:508px;top:659px;width:608px;height:15px;background:#cdcdcd"></div><svg class="a" style="left:495px;top:662px" width="8" height="10" viewBox="0 0 8 10"><path d="M6.4 1.2 L2.6 4.6 L6.4 8" stroke="#505050" stroke-width="2" fill="none"/></svg><svg class="a" style="left:1232px;top:662px" width="8" height="10" viewBox="0 0 8 10"><path d="M1.6 1.2 L5.4 4.6 L1.6 8" stroke="#505050" stroke-width="2" fill="none"/></svg><div class="a" style="left:501px;top:677px;width:743px;height:5px;background:linear-gradient(180deg,#b4b4b4,#cacaca)"></div><div class="a" style="left:519px;top:677px;width:647px;height:4px;background:linear-gradient(180deg,#969696,#acacac)"></div><div class="a" style="left:1244px;top:677px;width:12px;height:6px;background:#2c2c2c"></div></body></html>
